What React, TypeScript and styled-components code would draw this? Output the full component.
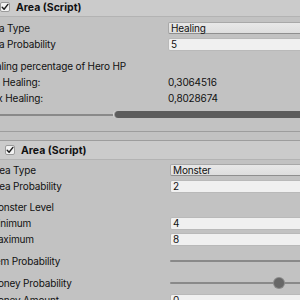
import React from "react";
import styled, { createGlobalStyle } from "styled-components";

const GlobalStyle = createGlobalStyle`
  html, body {
    margin: 0;
    padding: 0;
    background: #c2c2c2;
  }
`;

const Root = styled.div`
  width: 300px;
  height: 300px;
  overflow: hidden;
  background: #c2c2c2;
`;

const Inspector = styled.div`
  width: 380px;
  margin: -2px 0 0 -40px;

  font-family: Inter, "Noto Sans", sans-serif;
  font-size: 10px;
  letter-spacing: -0.15px;
  color: #111;
`;

const Component = styled.section`
  border-bottom: 1px solid #9d9d9d;
`;

const Spacer = styled.div`
  height: 8px;
  border-bottom: 1px solid #9d9d9d;
`;

const Header = styled.div<{ $shift: number }>`
  display: flex;
  align-items: center;
  gap: 6px;
  height: 18px;
  padding-left: ${(p) => 23 + p.$shift}px;

  background: #cbcbcb;
  border-bottom: 1px solid #b3b3b3;
`;

const ScriptIcon = styled.div`
  width: 12px;
  height: 12px;
  margin-right: -1px;
  border-radius: 2px;
  background: #dadada;
  border: 1px solid #9a9a9a;
  box-sizing: border-box;
`;

const CheckBox = styled.div`
  display: flex;
  justify-content: center;
  align-items: center;
  width: 10px;
  height: 10px;
  box-sizing: border-box;

  background: #f2f2f2;
  border: 1px solid #9a9a9a;
  border-radius: 2px;
`;

const Title = styled.div`
  font-weight: 700;
  font-size: 10.5px;
  letter-spacing: 0;
  color: #111;
`;

const Body = styled.div<{ $top: number; $bottom: number }>`
  display: flex;
  flex-direction: column;
  padding: ${(p) => p.$top}px 0 ${(p) => p.$bottom}px 0;
`;

const Row = styled.div<{ $gap?: number; $tall?: boolean; $pad: number }>`
  display: flex;
  align-items: center;
  height: ${(p) => (p.$tall ? 18 : 16)}px;
  margin-top: ${(p) => p.$gap ?? 0}px;
  padding-left: ${(p) => p.$pad}px;
  padding-right: 4px;
`;

const Label = styled.div<{ $width: number }>`
  flex: 0 0 ${(p) => p.$width}px;
  white-space: nowrap;
`;

const SubHeader = styled.div`
  white-space: nowrap;
`;

const Value = styled.div`
  flex: 1;
`;

const TextField = styled.div`
  flex: 1;
  display: flex;
  align-items: center;
  height: 13px;
  padding-left: 2px;
  box-sizing: border-box;

  background: #f0f0f0;
  border: 1px solid #b9b9b9;
  border-radius: 2px;
`;

const Dropdown = styled(TextField)`
  height: 12px;
  background: linear-gradient(#e8e8e8, #dedede);
  border-color: #a8a8a8;
  border-bottom-color: #8f8f8f;
`;

const SliderTrack = styled.div`
  position: relative;
  flex: 1;
  height: 2px;
  background: #898989;
  border-radius: 1px;
`;

const Knob = styled.div`
  position: absolute;
  top: -4px;
  width: 10px;
  height: 10px;
  margin-left: -5px;
  border-radius: 50%;
  background: #676767;
  box-shadow: 0 0 0 1px #8a8a8a;
`;

const RangeBar = styled.div`
  position: absolute;
  top: -3px;
  right: 0;
  height: 7px;
  background: #5c5c5c;
  border-radius: 4px 0 0 4px;
  box-shadow: -1px 0 0 0 #9a9a9a, -2px 0 0 0 #d8d8d8;
`;

const Check = () => (
  <svg width="8" height="8" viewBox="0 0 8 8">
    <polyline
      points="1.2,4.3 3.1,6.3 6.9,1.4"
      fill="none"
      stroke="#1d1d1d"
      strokeWidth="1.4"
      strokeLinecap="round"
      strokeLinejoin="round"
    />
  </svg>
);

type Field = {
  kind: "dropdown" | "text" | "value" | "slider" | "sub" | "minmax";
  label?: string;
  value?: string;
  knob?: number;
  gap?: number;
};

const ComponentPanel = ({
  shift,
  pad,
  labelWidth,
  top,
  bottom,
  fields,
}: {
  shift: number;
  pad: number;
  labelWidth: number;
  top: number;
  bottom: number;
  fields: Field[];
}) => (
  <Component>
    <Header $shift={shift}>
      <ScriptIcon />
      <CheckBox>
        <Check />
      </CheckBox>
      <Title>Area (Script)</Title>
    </Header>
    <Body $top={top} $bottom={bottom}>
      {fields.map((f, i) => {
        if (f.kind === "sub")
          return (
            <Row key={i} $gap={f.gap} $pad={pad}>
              <SubHeader>{f.label}</SubHeader>
            </Row>
          );
        if (f.kind === "minmax")
          return (
            <Row key={i} $gap={f.gap} $tall $pad={pad}>
              <SliderTrack>
                <RangeBar style={{ left: f.knob }} />
              </SliderTrack>
            </Row>
          );
        return (
          <Row key={i} $gap={f.gap} $tall={f.kind === "slider"} $pad={pad}>
            <Label $width={labelWidth}>{f.label}</Label>
            {f.kind === "dropdown" && <Dropdown>{f.value}</Dropdown>}
            {f.kind === "text" && <TextField>{f.value}</TextField>}
            {f.kind === "value" && <Value>{f.value}</Value>}
            {f.kind === "slider" && (
              <SliderTrack>
                {f.knob !== undefined && <Knob style={{ left: f.knob }} />}
              </SliderTrack>
            )}
          </Row>
        );
      })}
    </Body>
  </Component>
);

const healing: Field[] = [
  { kind: "dropdown", label: "Area Type", value: "Healing" },
  { kind: "text", label: "Area Probability", value: "5" },
  { kind: "sub", label: "Healing percentage of Hero HP", gap: 6 },
  { kind: "value", label: "Min Healing:", value: "0,3064516" },
  { kind: "value", label: "Max Healing:", value: "0,8028674" },
  { kind: "minmax", knob: 132 },
];

const monster: Field[] = [
  { kind: "dropdown", label: "Area Type", value: "Monster" },
  { kind: "text", label: "Area Probability", value: "2" },
  { kind: "sub", label: "Monster Level", gap: 5 },
  { kind: "text", label: "Minimum", value: "4" },
  { kind: "text", label: "Maximum", value: "8" },
  { kind: "slider", label: "Item Probability", gap: 5 },
  { kind: "slider", label: "Money Probability", knob: 109, gap: 4 },
  { kind: "text", label: "Money Amount", value: "0" },
];

export default function App() {
  return (
    <Root>
      <GlobalStyle />
      <Inspector>
        <ComponentPanel
          shift={0}
          pad={23}
          labelWidth={185}
          top={3}
          bottom={7}
          fields={healing}
        />
        <Spacer />
        <ComponentPanel
          shift={5}
          pad={29}
          labelWidth={181}
          top={2}
          bottom={6}
          fields={monster}
        />
      </Inspector>
    </Root>
  );
}
